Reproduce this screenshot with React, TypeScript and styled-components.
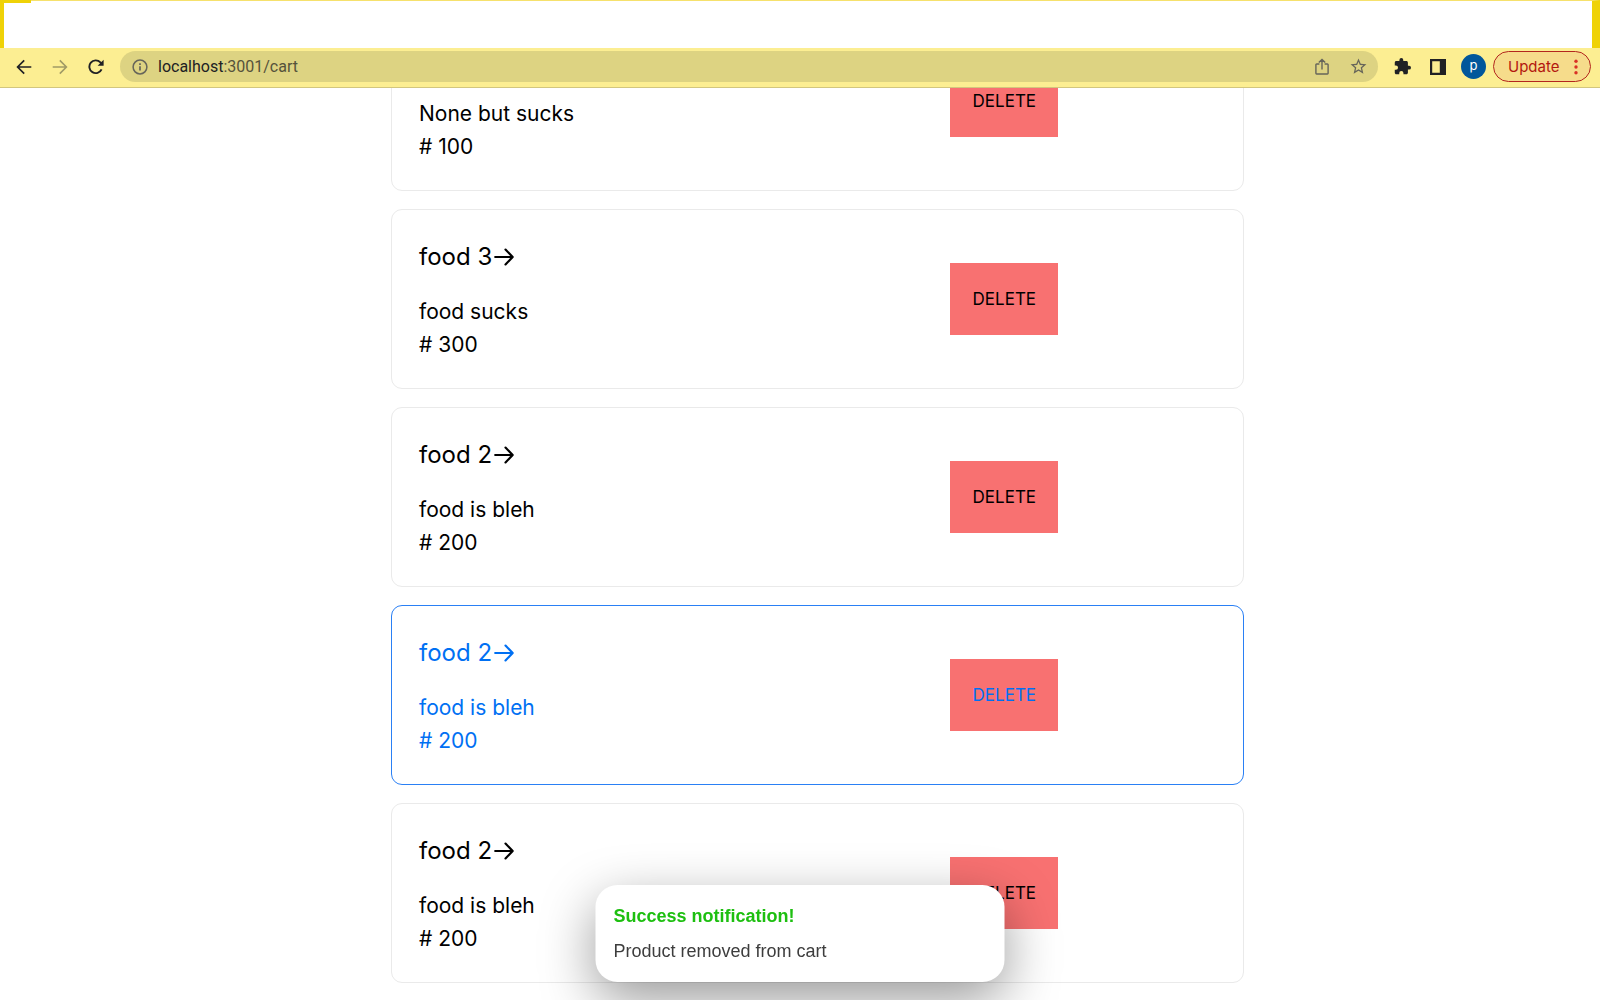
import React from "react";
import styled, { createGlobalStyle, css } from "styled-components";

const GlobalStyle = createGlobalStyle`
  *, *::before, *::after { box-sizing: border-box; }
  body {
    margin: 0;
    background: #fff;
    color: #000;
    font-family: Inter, "Liberation Sans", sans-serif;
  }
  button, input { font: inherit; color: inherit; }
`;

const Window = styled.div`
  display: flex;
  flex-direction: column;
  height: 100vh;
  overflow: hidden;
`;

const TabStrip = styled.header`
  position: relative;
  flex: none;
  height: 48px;
  background: #fff;
  border: solid #efd207;
  border-width: 1px 8px 0 4px;
  border-top-color: #f6e16c;

  &::before {
    content: "";
    position: absolute;
    top: -1px;
    left: -4px;
    width: 31px;
    height: 3px;
    background: #efd207;
  }
`;

const Toolbar = styled.nav`
  flex: none;
  display: flex;
  align-items: center;
  height: 40px;
  padding: 0 9px 2px 6px;
  background: #fcee92;
  border-bottom: 1px solid #d2c67e;
`;

const IconButton = styled.button<{ $muted?: boolean }>`
  display: grid;
  place-items: center;
  flex: none;
  width: 36px;
  height: 30px;
  padding: 0;
  border: 0;
  background: none;
  color: ${(p) => (p.$muted ? "#a09a66" : "#202124")};
`;

const AddressBar = styled.div`
  display: flex;
  align-items: center;
  flex: 1;
  height: 31px;
  margin: 0 6px;
  padding: 0 2px;
  border-radius: 16px;
  background: #ddd382;

  ${IconButton} { color: #66655a; }
`;

const Address = styled.div`
  flex: 1;
  font-size: 16px;
  line-height: 20px;
  font-family: Roboto, sans-serif;
  color: #55523b;

  b { font-weight: 400; color: #202124; }
`;

const Avatar = styled.button`
  flex: none;
  width: 25px;
  height: 25px;
  margin: 0 7px 0 5px;
  padding: 0 0 3px;
  border: 0;
  border-radius: 50%;
  background: #01579b;
  color: #fff;
  font-size: 13px;
  line-height: 20px;
`;

const UpdateButton = styled.button`
  display: flex;
  align-items: center;
  justify-content: space-between;
  flex: none;
  width: 98px;
  height: 31px;
  padding: 0 12px 0 14px;
  border: 1px solid #b3261e;
  border-radius: 16px;
  background: #f6dc8b;
  color: #b3180f;
  font-size: 15px;
  line-height: 20px;
`;

const Page = styled.main`
  flex: 1;
  min-height: 0;
  overflow: hidden;
  padding-left: 35px;
`;

const CartList = styled.ul`
  display: flex;
  flex-direction: column;
  gap: 18px;
  width: 100%;
  max-width: 853px;
  margin: -77px auto 0;
  padding: 0;
  list-style: none;
`;

const Card = styled.li<{ $active?: boolean }>`
  display: grid;
  grid-template-columns: 2fr 1fr;
  align-items: center;
  padding: 27px;
  border: 1px solid #eaeaea;
  border-radius: 11px;
  ${(p) =>
    p.$active &&
    css`
      color: #0070f3;
      border-color: #2a80f5;
    `}
`;

const Title = styled.h2`
  display: flex;
  align-items: center;
  gap: 2px;
  min-height: 40px;
  margin: 0 0 18px;
  font-size: 24px;
  line-height: 40px;
  font-weight: 400;
`;

const Detail = styled.p`
  margin: 0;
  font-size: 21px;
  line-height: 33px;
`;

const DeleteButton = styled.button`
  justify-self: start;
  width: 108px;
  height: 72px;
  padding: 0;
  border: 0;
  background: #f87171;
  font-size: 17px;
  line-height: 27px;
`;

const Toast = styled.div`
  position: fixed;
  left: 50%;
  bottom: 18px;
  transform: translateX(-50%);
  width: 409px;
  max-width: 100%;
  padding: 18px;
  border-radius: 22px;
  background: #fff;
  box-shadow: 0 18px 54px rgba(0, 0, 0, 0.4);
  font-family: "Liberation Sans", Arial, sans-serif;
  font-size: 18px;
  line-height: 26px;
  color: #3d3d3d;

  strong {
    display: block;
    margin-bottom: 9px;
    color: #1dbf10;
  }
`;

const BackIcon = () => (
  <svg width="16" height="16" viewBox="0 0 16 16" fill="none" stroke="currentColor" strokeWidth="1.7">
    <path d="M15.3 8H1.8M8.2 1.4 1.6 8l6.6 6.6" />
  </svg>
);

const ForwardIcon = () => (
  <svg width="16" height="16" viewBox="0 0 16 16" fill="none" stroke="currentColor" strokeWidth="1.6">
    <path d="M.7 8h13.5M7.8 1.4 14.4 8l-6.6 6.6" />
  </svg>
);

const ReloadIcon = () => (
  <svg width="16" height="16" viewBox="0 0 16 16" fill="none" stroke="currentColor" strokeWidth="1.9">
    <path d="M13.6 10.4A6.4 6.4 0 1 1 12.4 3.3L13.6 4.6" />
    <path d="M15.6.8v6h-6z" fill="currentColor" stroke="none" />
  </svg>
);

const InfoIcon = () => (
  <svg width="16" height="16" viewBox="0 0 16 16" fill="none" stroke="currentColor" strokeWidth="1.5">
    <circle cx="8" cy="8" r="6.9" />
    <path d="M8 7.2v4.2M8 4.3V6" strokeWidth="1.7" />
  </svg>
);

const ShareIcon = () => (
  <svg width="14" height="17" viewBox="0 0 14 17" fill="none" stroke="currentColor" strokeWidth="1.4">
    <path d="M4.4 6H1.6a.7.7 0 0 0-.7.7v8.6c0 .4.3.7.7.7h10.8c.4 0 .7-.3.7-.7V6.7a.7.7 0 0 0-.7-.7H9.6M7 11.5V1.6M3.8 4.6 7 1.4l3.2 3.2" />
  </svg>
);

const StarIcon = () => (
  <svg width="19" height="19" viewBox="0 0 24 24" fill="currentColor">
    <path d="m22 9.24-7.19-.62L12 2 9.19 8.63 2 9.24l5.46 4.73L5.82 21 12 17.27 18.18 21l-1.63-7.03zM12 15.4l-3.76 2.27 1-4.28-3.32-2.88 4.38-.38L12 6.1l1.71 4.04 4.38.38-3.32 2.88 1 4.28z" />
  </svg>
);

const PuzzleIcon = () => (
  <svg width="17" height="17" viewBox="1 1 22 22" fill="currentColor">
    <path d="M20.5 11H19V7c0-1.1-.9-2-2-2h-4V3.5a2.5 2.5 0 0 0-5 0V5H4c-1.1 0-2 .9-2 2v3.800h1.500a2.700 2.700 0 0 1 0 5.400H2V20c0 1.100.9 2 2 2h3.800v-1.500a2.700 2.700 0 0 1 5.400 0V22H17c1.100 0 2-.9 2-2v-4h1.500a2.500 2.500 0 0 0 0-5z" />
  </svg>
);

const PanelIcon = () => (
  <svg width="16" height="16" viewBox="0 0 16 16" fill="currentColor">
    <path fillRule="evenodd" d="M0 0h16v16H0zM2.2 2.2v11.6h7.6V2.2z" />
  </svg>
);

const MenuDots = () => (
  <svg width="4" height="16" viewBox="0 0 4 16" fill="#d93025">
    <circle cx="2" cy="2.2" r="1.7" />
    <circle cx="2" cy="8" r="1.7" />
    <circle cx="2" cy="13.8" r="1.7" />
  </svg>
);

const TitleArrow = () => (
  <svg width="20" height="18" viewBox="0 0 20 18" fill="none" stroke="currentColor" strokeWidth="2.2" strokeLinecap="round" strokeLinejoin="round">
    <path d="M1.2 9h17.5M11.5 1.6 18.7 9l-7.2 7.4" />
  </svg>
);

interface CartItem {
  title?: string;
  description: string;
  price: number;
  active?: boolean;
}

const items: CartItem[] = [
  { description: "None but sucks", price: 100 },
  { title: "food 3", description: "food sucks", price: 300 },
  { title: "food 2", description: "food is bleh", price: 200 },
  { title: "food 2", description: "food is bleh", price: 200, active: true },
  { title: "food 2", description: "food is bleh", price: 200 },
];

const CartCard = ({ title, description, price, active }: CartItem) => (
  <Card $active={active}>
    <div>
      <Title>
        {title}
        {title && <TitleArrow />}
      </Title>
      <Detail>{description}</Detail>
      <Detail># {price}</Detail>
    </div>
    <DeleteButton type="button">DELETE</DeleteButton>
  </Card>
);

export default function App() {
  return (
    <Window>
      <GlobalStyle />
      <TabStrip />
      <Toolbar>
        <IconButton type="button"><BackIcon /></IconButton>
        <IconButton type="button" $muted><ForwardIcon /></IconButton>
        <IconButton type="button"><ReloadIcon /></IconButton>
        <AddressBar>
          <IconButton type="button"><InfoIcon /></IconButton>
          <Address><b>localhost</b>:3001/cart</Address>
          <IconButton type="button"><ShareIcon /></IconButton>
          <IconButton type="button"><StarIcon /></IconButton>
        </AddressBar>
        <IconButton type="button"><PuzzleIcon /></IconButton>
        <IconButton type="button"><PanelIcon /></IconButton>
        <Avatar type="button">p</Avatar>
        <UpdateButton type="button">
          Update
          <MenuDots />
        </UpdateButton>
      </Toolbar>
      <Page>
        <CartList>
          {items.map((item, index) => (
            <CartCard key={index} {...item} />
          ))}
        </CartList>
      </Page>
      <Toast role="status">
        <strong>Success notification!</strong>
        Product removed from cart
      </Toast>
    </Window>
  );
}
